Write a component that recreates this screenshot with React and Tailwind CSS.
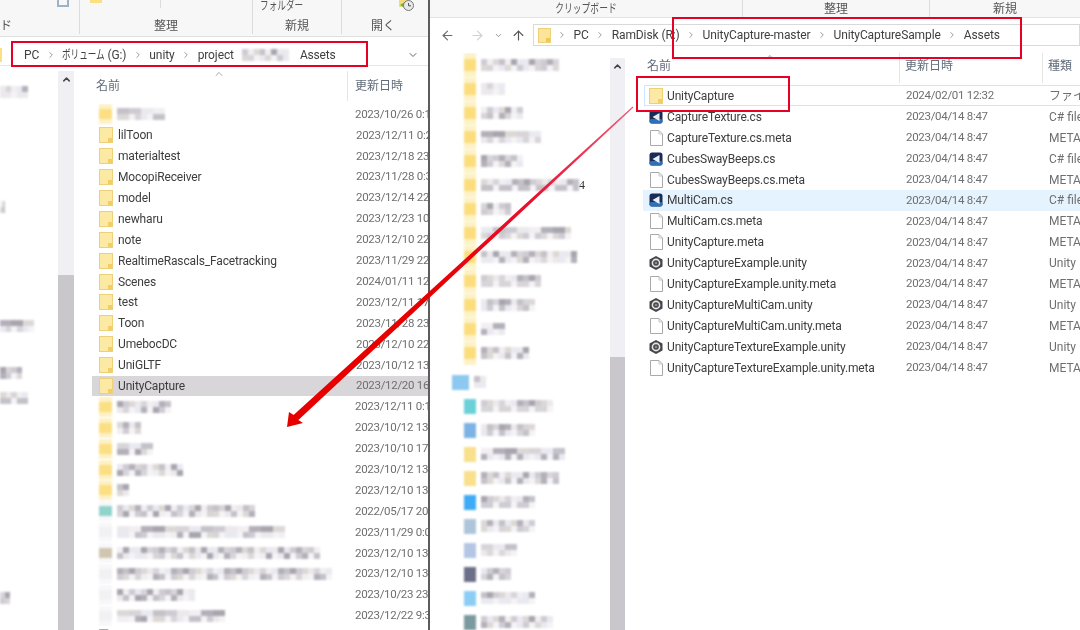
import { ArrowLeft, ArrowRight, ArrowUp, ChevronDown, ChevronRight, ChevronUp } from 'lucide-react';

const GRAYS = ['#d8d5d9', '#c4c1c8', '#ebe9ec', '#b3b0b9', '#dcd8d6', '#e9e9f1', '#cfcbd3', '#f1eff1', '#a8a5ae'];

// pixelated (censored) text
function Mosaic({ w, seed = 1, strong = false }) {
  const n = Math.max(2, Math.round(w / 6));
  const cell = (i, row) => GRAYS[(i * 7 + seed * 5 + row * 3 + (i * seed) % 4) % (strong || row === 0 ? 9 : 7)];
  return (
    <div className="blur-[1px] shrink-0" style={{ width: w }}>
      {[0, 1].map((row) => (
        <div key={row} className="flex h-[6px]">
          {Array.from({ length: n }, (_, i) => (
            <div key={i} className="flex-1" style={{ background: row === 1 && i % 3 === 2 ? '#f4f3f5' : cell(i, row) }} />
          ))}
        </div>
      ))}
    </div>
  );
}

function FolderIcon() {
  return (
    <svg width="14" height="16" viewBox="0 0 14 16" className="shrink-0">
      <rect x="0.5" y="0.5" width="13" height="15" fill="#fce9a4" stroke="#eecf7a" />
      <rect x="9" y="11" width="4" height="4" fill="#f3cf62" />
    </svg>
  );
}

function CsIcon() {
  return (
    <svg width="14" height="14" viewBox="0 0 14 14" className="shrink-0">
      <rect x="0.5" y="0.5" width="13" height="13" rx="2.5" fill="#1a2b55" />
      <rect x="0.5" y="9" width="13" height="4.5" rx="2" fill="#2f6fb5" />
      <path d="M10.5 3 L3.5 7 L10.5 11 Z" fill="#e8f0fa" />
    </svg>
  );
}

function FileIcon() {
  return (
    <svg width="13" height="16" viewBox="0 0 13 16" className="shrink-0">
      <path d="M0.5 0.5 H9 L12.5 4 V15.5 H0.5 Z" fill="#fff" stroke="#a9a9a9" />
      <path d="M9 0.5 V4 H12.5" fill="none" stroke="#c4c4c4" />
    </svg>
  );
}

function UnityIcon() {
  return (
    <svg width="14" height="14" viewBox="0 0 14 14" className="shrink-0">
      <path d="M7 0 L13.5 3.5 V10.5 L7 14 L0.5 10.5 V3.5 Z" fill="#45454a" />
      <circle cx="7" cy="7" r="3.6" fill="none" stroke="#e4e4e4" strokeWidth="1.6" />
      <circle cx="7" cy="7" r="1.3" fill="#8b8b8f" />
    </svg>
  );
}

const LEFT_ROWS = [
  { blur: 48, date: '2023/10/26 0:12' },
  { name: 'lilToon', date: '2023/12/11 0:25' },
  { name: 'materialtest', date: '2023/12/18 23:10' },
  { name: 'MocopiReceiver', date: '2023/11/28 0:31' },
  { name: 'model', date: '2023/12/14 22:05' },
  { name: 'newharu', date: '2023/12/23 10:11' },
  { name: 'note', date: '2023/12/10 22:40' },
  { name: 'RealtimeRascals_Facetracking', date: '2023/11/29 22:18' },
  { name: 'Scenes', date: '2024/01/11 12:02' },
  { name: 'test', date: '2023/12/11 17:30' },
  { name: 'Toon', date: '2023/11/28 23:44' },
  { name: 'UmebocDC', date: '2023/12/10 22:12' },
  { name: 'UniGLTF', date: '2023/10/12 13:20' },
  { name: 'UnityCapture', date: '2023/12/20 16:33', selected: true },
  { blur: 54, date: '2023/12/11 0:15' },
  { blur: 24, date: '2023/10/12 13:20' },
  { blur: 36, date: '2023/10/10 17:02' },
  { blur: 66, date: '2023/10/12 13:20' },
  { blur: 12, date: '2023/12/10 13:51' },
  { blur: 138, date: '2022/05/17 20:06', icon: '#8fd3cb', file: true },
  { blur: 168, date: '2023/11/29 0:05', icon: '#f1f1f3', file: true },
  { blur: 203, date: '2023/12/10 13:51', icon: '#cfc6b0', file: true },
  { blur: 215, date: '2023/12/10 13:51', icon: '#f1f1f3', file: true },
  { blur: 78, date: '2023/10/23 23:12', icon: '#f1f1f3', file: true },
  { blur: 108, date: '2023/12/22 9:31', icon: '#f1f1f3', file: true },
];

const RIGHT_ROWS = [
  { kind: 'cs', name: 'CaptureTexture.cs', type: 'C# file' },
  { kind: 'file', name: 'CaptureTexture.cs.meta', type: 'META' },
  { kind: 'cs', name: 'CubesSwayBeeps.cs', type: 'C# file' },
  { kind: 'file', name: 'CubesSwayBeeps.cs.meta', type: 'META' },
  { kind: 'cs', name: 'MultiCam.cs', type: 'C# file', hover: true },
  { kind: 'file', name: 'MultiCam.cs.meta', type: 'META' },
  { kind: 'file', name: 'UnityCapture.meta', type: 'META' },
  { kind: 'unity', name: 'UnityCaptureExample.unity', type: 'Unity' },
  { kind: 'file', name: 'UnityCaptureExample.unity.meta', type: 'META' },
  { kind: 'unity', name: 'UnityCaptureMultiCam.unity', type: 'Unity' },
  { kind: 'file', name: 'UnityCaptureMultiCam.unity.meta', type: 'META' },
  { kind: 'unity', name: 'UnityCaptureTextureExample.unity', type: 'Unity' },
  { kind: 'file', name: 'UnityCaptureTextureExample.unity.meta', type: 'META' },
];

const ICONS = { cs: CsIcon, file: FileIcon, unity: UnityIcon };

const NAV_FOLDERS = [78, 24, 42, 60, 42, 98, 30, 90, 96, 60, 54, 24, 48];
const NAV_LOWER = [
  { c: '#8cc8f0', w: 12, x: 'ml-[22px]', i: 'w-[17px]' },
  { c: '#6bd0d8', w: 72, x: 'ml-[34px]', i: 'w-[12px]' },
  { c: '#7cb2e4', w: 54, x: 'ml-[34px]', i: 'w-[12px]' },
  { c: '#f8e08c', w: 84, x: 'ml-[34px]', i: 'w-[12px]' },
  { c: '#f8e08c', w: 78, x: 'ml-[34px]', i: 'w-[12px]' },
  { c: '#3faaf5', w: 54, x: 'ml-[34px]', i: 'w-[12px]' },
  { c: '#aec4d8', w: 54, x: 'ml-[34px]', i: 'w-[12px]' },
  { c: '#b4c6e4', w: 36, x: 'ml-[34px]', i: 'w-[12px]' },
  { c: '#6c6f88', w: 30, x: 'ml-[34px]', i: 'w-[12px]' },
  { c: '#8ccdf5', w: 54, x: 'ml-[34px]', i: 'w-[12px]' },
  { c: '#7a9aa0', w: 72, x: 'ml-[34px]', i: 'w-[12px]' },
];

function Crumbs({ items }) {
  return (
    <div className="flex items-center gap-[6.5px] text-[12px] tracking-[-0.1px] text-[#3f3f3f]">
      {items.map((item, i) => (
        <div key={i} className="flex items-center gap-[6.5px]">
          <ChevronRight size={10} strokeWidth={2} className="text-[#8a8a8a]" />
          {item}
        </div>
      ))}
    </div>
  );
}

function RibbonGroup({ w, label, border = true, children, labelClass = '' }) {
  return (
    <div className={`flex flex-col justify-end relative shrink-0 ${border ? 'border-r border-[#dcdcdc]' : ''}`} style={{ width: w }}>
      {children}
      <div className={`text-center text-[12px] leading-[16px] text-[#555] whitespace-nowrap ${labelClass}`}>{label}</div>
    </div>
  );
}

function LeftRow({ row, i }) {
  return (
    <div className={`flex items-center h-[20.9px] shrink-0 ml-[18px] pl-[7px] overflow-hidden text-[12px] ${row.selected ? 'bg-[#d8d6d9]' : ''}`}>
      {row.blur ? (
        <div className="w-[13px] h-[20px] shrink-0 blur-[1px] flex flex-col justify-center" style={{ background: row.file ? '#f8f8fa' : '#fdf1c4' }}>
          <div className="h-[10px]" style={{ background: row.icon || '#fbdf82' }} />
        </div>
      ) : (
        <FolderIcon />
      )}
      <div className="ml-[5px] w-[238px] shrink-0 tracking-[-0.15px] text-[#3d3d3d] whitespace-nowrap">
        {row.blur ? <Mosaic w={row.blur} seed={i + 2} strong /> : row.name}
      </div>
      <div className="text-[11.5px] tracking-[-0.3px] text-[#6f6f6f] whitespace-nowrap">{row.date}</div>
    </div>
  );
}

function RightRow({ row }) {
  const Icon = ICONS[row.kind];
  return (
    <div className={`flex items-center h-[20.9px] shrink-0 ml-[18px] pl-[6px] text-[12px] whitespace-nowrap ${row.hover ? 'bg-[#e5f3ff]' : ''}`}>
      <div className="w-[14px] flex justify-center shrink-0"><Icon /></div>
      <div className="ml-[4px] w-[239px] shrink-0 tracking-[-0.15px] text-[#3d3d3d]">{row.name}</div>
      <div className="w-[143px] shrink-0 text-[11.5px] tracking-[-0.3px] text-[#6f6f6f]">2023/04/14 8:47</div>
      <div className="text-[#6f6f6f]">{row.type}</div>
    </div>
  );
}

function ScrollBar({ w, thumb }) {
  return (
    <div className="flex flex-col shrink-0 bg-[#f0eff3] mt-[5px]" style={{ width: w }}>
      <div className="flex justify-center pt-[3px]"><ChevronUp size={11} strokeWidth={3.2} className="text-[#444]" /></div>
      <div className="flex-1" />
      <div className="bg-[#c9c7cb]" style={{ height: thumb }} />
    </div>
  );
}

function LeftPane() {
  return (
    <div className="w-[430px] shrink-0 flex flex-col border-r-2 border-[#5c5c5c] overflow-hidden">
      {/* ribbon */}
      <div className="h-[37px] shrink-0 flex bg-[#f7f7f8] border-b border-[#dfdfdf] pb-[2px]">
        <RibbonGroup w={80} label="ド" labelClass="text-left">
          <div className="absolute left-[57px] top-0 w-[12px] h-[7px] border-2 border-t-0 border-[#9db2c9]" />
        </RibbonGroup>
        <RibbonGroup w={173} label="整理">
          <div className="absolute left-[10px] top-0 w-[12px] h-[3px] bg-[#fbdf82]" />
          <div className="absolute left-[80px] top-0 h-[8px] border-r border-[#dcdcdc]" />
        </RibbonGroup>
        <RibbonGroup w={89} label="新規">
          <div className="absolute left-[7px] top-[-1px] text-[12px] leading-[14px] text-[#555] whitespace-nowrap origin-left scale-x-[0.72]">フォルダー</div>
        </RibbonGroup>
        <RibbonGroup w={86} label="開く" border={false} labelClass="pr-[4px]">
          <svg width="15" height="11" viewBox="0 0 15 11" className="absolute left-[57px] top-0">
            <rect x="0" y="0" width="8" height="7" fill="#f6d97a" />
            <path d="M1 5 L6 2 V8 Z" fill="#58b947" />
            <circle cx="9.5" cy="5.5" r="5" fill="#e9e9e9" stroke="#777" />
            <path d="M9.5 3 V5.8 H12" fill="none" stroke="#555" />
          </svg>
        </RibbonGroup>
      </div>

      {/* address bar */}
      <div className="h-[29px] shrink-0 flex items-center border-b border-[#e6e6e6] pl-[24px] pt-[8px] relative">
        <div className="absolute left-0 top-[11px] w-[2px] h-[14px] bg-[#fbdf82]" />
        <div className="text-[12px] text-[#3f3f3f] mr-[6.5px]">PC</div>
        <Crumbs items={[
          <span className="whitespace-nowrap flex items-center">
            <span className="inline-block w-[43px] origin-left scale-x-[0.72]">ボリューム</span>
            <span className="ml-[2px]">(G:)</span>
          </span>,
          'unity',
          'project',
        ]} />
        <div className="ml-[8px] mr-[11px]"><Mosaic w={47} seed={3} /></div>
        <div className="text-[12px] tracking-[-0.2px] text-[#3f3f3f]">Assets</div>
        <ChevronDown size={12} strokeWidth={2} className="absolute right-[9px] top-[12px] text-[#666]" />
      </div>

      <div className="flex-1 flex min-h-0">
        {/* nav pane */}
        <div className="w-[58px] shrink-0 overflow-hidden">
          <div className="mt-[20px]"><Mosaic w={28} seed={4} /></div>
          <div className="mt-[103px]"><Mosaic w={5} seed={5} /></div>
          <div className="mt-[107px]"><Mosaic w={34} seed={6} /></div>
          <div className="mt-[35px]"><Mosaic w={22} seed={7} /></div>
          <div className="mt-[13px]"><Mosaic w={28} seed={8} /></div>
          <div className="mt-[188px]"><Mosaic w={10} seed={9} /></div>
        </div>
        <ScrollBar w={16} thumb={355} />

        {/* file list */}
        <div className="flex-1 min-w-0 flex flex-col overflow-hidden">
          <div className="h-[38px] shrink-0 flex relative text-[12px] text-[#5f6b7a]">
            <ChevronUp size={12} strokeWidth={1.5} className="absolute left-[139px] top-[2px] text-[#8a8a8a]" />
            <div className="ml-[22px] w-[252px] pt-[7px] border-r border-[#e5e5e5] mb-[3px] mt-[5px] leading-[16px]">名前</div>
            <div className="ml-[7px] pt-[7px] mt-[5px] leading-[16px] whitespace-nowrap">更新日時</div>
          </div>
          {LEFT_ROWS.map((row, i) => <LeftRow key={i} row={row} i={i} />)}
          <div className="h-[20.9px] shrink-0 ml-[25px] flex items-center"><FileIcon /></div>
        </div>
      </div>
    </div>
  );
}

function RightPane() {
  return (
    <div className="flex-1 min-w-0 flex flex-col overflow-hidden">
      {/* ribbon */}
      <div className="h-[18px] shrink-0 flex bg-[#f7f7f8] border-b border-[#e2e2e2]">
        <RibbonGroup w={313} label="クリップボード" labelClass="leading-[15px] scale-x-[0.73]" />
        <RibbonGroup w={187} label="整理" labelClass="leading-[15px]" />
        <RibbonGroup w={150} label="新規" border={false} labelClass="leading-[15px]" />
      </div>

      {/* address bar */}
      <div className="h-[35px] shrink-0 flex items-center pl-[10px] pb-[5px] pt-[4px]">
        <ArrowLeft size={15} strokeWidth={1.8} className="text-[#6a6a6a]" />
        <ArrowRight size={15} strokeWidth={1.8} className="ml-[15px] text-[#d0d0d0]" />
        <ChevronDown size={9} strokeWidth={2} className="ml-[9px] text-[#777]" />
        <ArrowUp size={15} strokeWidth={1.8} className="ml-[8px] text-[#555]" />
        <div className="ml-[7px] h-[22px] flex-1 flex items-center border border-[#d9d9d9] pl-[4px]">
          <svg width="13" height="15" viewBox="0 0 13 15" className="shrink-0">
            <rect x="0.5" y="0.5" width="12" height="14" fill="#fce49a" stroke="#eecf7a" />
            <rect x="8" y="10" width="4" height="4" fill="#f0c850" />
          </svg>
          <div className="ml-[6px]">
            <Crumbs items={[
              'PC',
              <span className="whitespace-nowrap">RamDisk (R:)</span>,
              'UnityCapture-master',
              'UnityCaptureSample',
              'Assets',
            ]} />
          </div>
        </div>
      </div>

      <div className="flex-1 flex min-h-0">
        {/* nav pane */}
        <div className="w-[180px] shrink-0 overflow-hidden flex flex-col">
          {NAV_FOLDERS.map((w, i) => (
            <div key={i} className="h-[24px] shrink-0 flex items-center">
              <div className="ml-[34px] w-[12px] h-[24px] shrink-0 bg-[#fdf2c6] blur-[1px] flex items-center">
                <div className="w-full h-[12px] bg-[#fbdd7e]" />
              </div>
              <div className="ml-[5px]"><Mosaic w={w} seed={i + 3} /></div>
              {i === 5 && <span className="font-['Liberation_Serif',serif] text-[12px] text-[#333]">4</span>}
            </div>
          ))}
          <div className="h-[5px] shrink-0" />
          {NAV_LOWER.map((n, i) => (
            <div key={i} className="h-[24px] shrink-0 flex items-center">
              <div className={`${n.x} ${n.i} h-[15px] shrink-0 blur-[1px]`} style={{ background: n.c }} />
              <div className="ml-[5px]"><Mosaic w={n.w} seed={i + 11} /></div>
            </div>
          ))}
        </div>
        <ScrollBar w={15} thumb={273} />

        {/* file list */}
        <div className="flex-1 min-w-0 flex flex-col overflow-hidden">
          <div className="h-[32px] shrink-0 flex relative text-[12px] text-[#5f6b7a]">
            <ChevronUp size={12} strokeWidth={1.5} className="absolute left-[139px] top-[-2px] text-[#8a8a8a]" />
            <div className="ml-[22px] w-[253px] border-r border-[#e5e5e5] mb-[2px] pt-[5px] leading-[16px]">名前</div>
            <div className="ml-[5px] w-[138px] border-r border-[#e5e5e5] mb-[2px] pt-[5px] leading-[16px] whitespace-nowrap">更新日時</div>
            <div className="ml-[5px] pt-[5px] leading-[16px] whitespace-nowrap">種類</div>
          </div>
          <div className="flex items-center h-[21.4px] shrink-0 ml-[19px] pl-[4px] mb-[0.1px] border border-[#cce8ff] border-r-0 text-[12px] whitespace-nowrap">
            <FolderIcon />
            <div className="ml-[4px] w-[239px] shrink-0 tracking-[-0.15px] text-[#3d3d3d]">UnityCapture</div>
            <div className="w-[143px] shrink-0 text-[11.5px] tracking-[-0.3px] text-[#6f6f6f]">2024/02/01 12:32</div>
            <div className="text-[#6f6f6f]">ファイル</div>
          </div>
          {RIGHT_ROWS.map((row) => <RightRow key={row.name} row={row} />)}
        </div>
      </div>
    </div>
  );
}

export default function App() {
  return (
    <div className="relative w-[1080px] h-[630px] overflow-hidden bg-white flex blur-[0.3px] font-['Roboto','Noto_Sans_CJK_JP',sans-serif]">
      <LeftPane />
      <RightPane />

      {/* annotations on top of the screenshot */}
      <div className="absolute left-[11px] top-[41px] w-[357px] h-[26px] border-2 border-[#e60026]" />
      <div className="absolute left-[672px] top-[17px] w-[350px] h-[42px] border-2 border-[#e60026]" />
      <div className="absolute left-[636px] top-[76px] w-[154px] h-[36px] border-2 border-[#e60026]" />
      <svg width="1080" height="630" viewBox="0 0 1080 630" className="absolute inset-0 pointer-events-none">
        <defs>
          <linearGradient id="arrowFade" x1="633" y1="107" x2="430" y2="295" gradientUnits="userSpaceOnUse">
            <stop offset="0" stopColor="#ee5a76" />
            <stop offset="0.5" stopColor="#e81030" />
            <stop offset="1" stopColor="#e60000" />
          </linearGradient>
        </defs>
        <polygon points="633.4,107.4 298.4,420.1 303,423 287,427 289,412 293.6,414.9 632.6,106.6" fill="url(#arrowFade)" />
      </svg>
    </div>
  );
}
